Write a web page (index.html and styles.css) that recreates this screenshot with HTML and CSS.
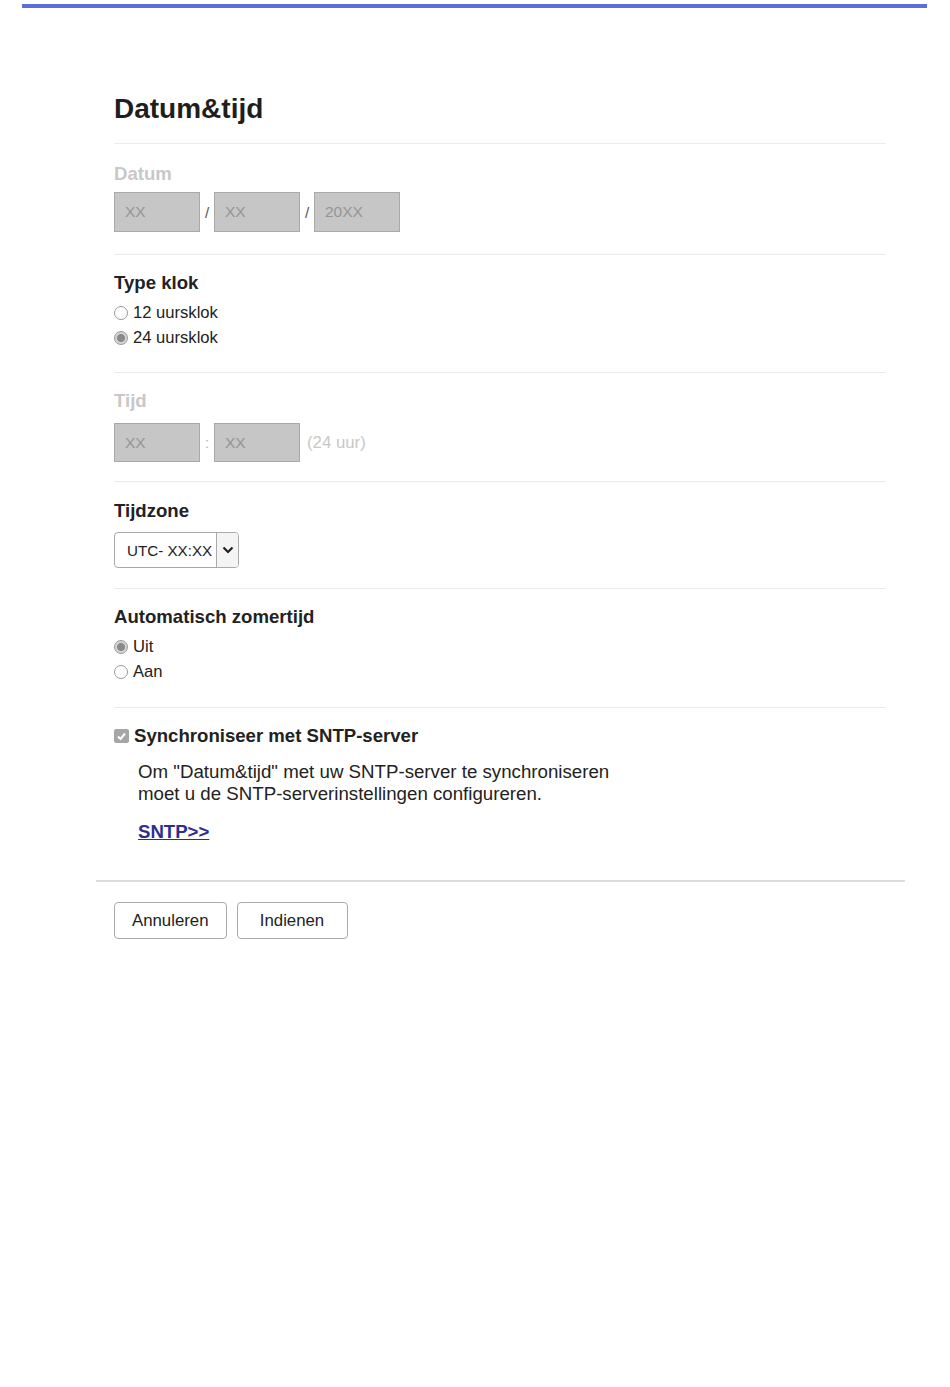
FILE: index.html
```html
<!DOCTYPE html>
<html>
<head>
    <meta charset="utf-8">
    <title>Datum&amp;tijd</title>
    <link rel="stylesheet" href="styles.css">
</head>
<body>
    <div class="topbar"></div>

    <div class="page">
        <div class="content">
            <h1 class="title">Datum&amp;tijd</h1>

            <div class="field datum">
                <div class="label disabled">Datum</div>
                <div class="inputs">
                    <span class="box">XX</span>
                    <span class="sep">/</span>
                    <span class="box">XX</span>
                    <span class="sep">/</span>
                    <span class="box">20XX</span>
                </div>
            </div>

            <div class="field">
                <div class="label">Type klok</div>
                <div class="options">
                    <label class="option"><span class="radio"></span>12 uursklok</label>
                    <label class="option"><span class="radio checked"></span>24 uursklok</label>
                </div>
            </div>

            <div class="field tijd">
                <div class="label disabled">Tijd</div>
                <div class="inputs time">
                    <span class="box">XX</span>
                    <span class="sep">:</span>
                    <span class="box">XX</span>
                    <span class="hint">(24 uur)</span>
                </div>
            </div>

            <div class="field zone">
                <div class="label">Tijdzone</div>
                <div class="select">
                    <span class="select-value">UTC- XX:XX</span>
                    <span class="select-arrow">
                        <svg width="12" height="8" viewBox="0 0 12 8"><path d="M1.5 1.5 L6 6 L10.5 1.5" fill="none" stroke="#222" stroke-width="2.2"/></svg>
                    </span>
                </div>
            </div>

            <div class="field zomer">
                <div class="label">Automatisch zomertijd</div>
                <div class="options tight">
                    <label class="option"><span class="radio checked"></span>Uit</label>
                    <label class="option"><span class="radio"></span>Aan</label>
                </div>
            </div>

            <div class="field last">
                <div class="check-row">
                    <span class="checkbox">
                        <svg width="11" height="11" viewBox="0 0 11 11"><path d="M2 5.5 L4.5 8 L9 2.5" fill="none" stroke="#fff" stroke-width="2"/></svg>
                    </span>
                    <span class="label">Synchroniseer met SNTP-server</span>
                </div>
                <p class="note">Om "Datum&amp;tijd" met uw SNTP-server te synchroniseren<br>moet u de SNTP-serverinstellingen configureren.</p>
                <a class="link" href="#">SNTP&gt;&gt;</a>
            </div>
        </div>

        <div class="footer">
            <button class="btn">Annuleren</button>
            <button class="btn">Indienen</button>
        </div>
    </div>
</body>
</html>
```

FILE: styles.css
```css
body {
    margin: 0;
    background: #fff;
    font-family: "Liberation Sans", Arial, sans-serif;
    color: #222;
}
.topbar {
    height: 4px;
    margin: 4px 23px 0 22px;
    background: #5b6fda;
}
.page {
    width: 809px;
    margin-left: 96px;
}
.content {
    padding: 0 19px 0 18px;
}
.title {
    margin: 85px 0 0;
    padding-bottom: 18px;
    font-size: 28px;
    line-height: 32px;
    font-weight: bold;
    color: #1e1e1e;
    border-bottom: 1px solid #ebebeb;
}
.field {
    padding: 17px 0 22px;
    border-bottom: 1px solid #ebebeb;
}
.field.datum {
    padding-top: 19px;
}
.field.tijd {
    padding-bottom: 19px;
}
.field.zone {
    padding: 18px 0 20px;
}
.field.zomer {
    padding-bottom: 23px;
}
.field.last {
    border-bottom: none;
    padding: 17px 0 37px;
}
.label {
    font-size: 18.6px;
    line-height: 22px;
    font-weight: bold;
    color: #222;
}
.label.disabled {
    color: #c8c8c8;
}
.inputs {
    display: flex;
    align-items: center;
    margin-top: 7px;
}
.inputs.time {
    margin-top: 11px;
}
.box {
    box-sizing: border-box;
    width: 86px;
    height: 40px;
    padding-left: 10px;
    display: flex;
    align-items: center;
    background: #c6c6c6;
    border: 1px solid #a9a9a9;
    font-size: 15.5px;
    color: #959595;
}
.inputs.time .box {
    height: 39px;
}
.sep {
    width: 14px;
    text-align: center;
    font-size: 15px;
    color: #555;
}
.inputs.time .sep {
    color: #bbb;
}
.hint {
    margin-left: 7px;
    font-size: 16.8px;
    color: #c8c8c8;
}
.options {
    margin-top: 6px;
}
.options.tight {
    margin-top: 6px;
}
.option {
    display: flex;
    align-items: center;
    height: 25px;
    font-size: 16.6px;
    color: #222;
}
.radio {
    box-sizing: border-box;
    width: 14px;
    height: 14px;
    margin-right: 5px;
    border: 1px solid #9a9a9a;
    border-radius: 50%;
    background: #fff;
}
.radio.checked {
    background: radial-gradient(circle, #8a8a8a 0, #8a8a8a 3.6px, #d4d4d4 4.4px);
}
.select {
    display: flex;
    box-sizing: border-box;
    width: 125px;
    height: 36px;
    margin-top: 10px;
    border: 1px solid #aaa;
    border-radius: 4px;
    overflow: hidden;
}
.select-value {
    flex: 1;
    display: flex;
    align-items: center;
    padding-left: 12px;
    font-size: 15.2px;
    color: #222;
    white-space: nowrap;
}
.select-arrow {
    width: 21px;
    display: flex;
    align-items: center;
    justify-content: center;
    border-left: 1px solid #aaa;
    background: #f4f4f4;
}
.check-row {
    display: flex;
    align-items: center;
}
.checkbox {
    width: 15px;
    height: 14px;
    margin-right: 5px;
    display: flex;
    align-items: center;
    justify-content: center;
    background: #a6a6a6;
    border-radius: 2px;
}
.note {
    margin: 14px 0 0 24px;
    font-size: 18.7px;
    line-height: 22px;
    color: #222;
}
.link {
    display: inline-block;
    margin: 16px 0 0 24px;
    font-size: 18.6px;
    line-height: 22px;
    font-weight: bold;
    color: #2e2e8e;
}
.footer {
    display: flex;
    gap: 10px;
    padding: 20px 0 0 18px;
    border-top: 2px solid #dcdcdc;
}
.btn {
    height: 37px;
    min-width: 111px;
    padding: 0 17px;
    font-family: "Liberation Sans", Arial, sans-serif;
    font-size: 16.8px;
    color: #222;
    background: #fff;
    border: 1px solid #aaa;
    border-radius: 4px;
}
```
